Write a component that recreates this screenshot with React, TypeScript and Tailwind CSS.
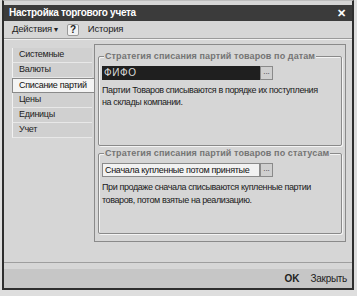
import React from "react";

const tabs = ["Системные", "Валюты", "Списание партий", "Цены", "Единицы", "Учет"];

function GroupBox({ title, children, className }: { title: string; children: React.ReactNode; className?: string }) {
  return (
    <div className={"relative border border-[#8a8a8a] rounded-[2px] shadow-[inset_1px_1px_0_#f4f4f4,1px_1px_0_#f4f4f4] " + (className || "")}>
      <div className="absolute -top-[7px] left-[5px] px-[1px] bg-[#d6d6d6] text-[9px] font-bold leading-[12px] text-[#747474] whitespace-nowrap tracking-[0.1px]">
        {title}
      </div>
      {children}
    </div>
  );
}

export default function App() {
  return (
    <div className="w-[357px] h-[296px] bg-[#dedede] overflow-hidden" style={{ fontFamily: '"Liberation Sans", Arial, sans-serif' }}>
      <div className="ml-[2px] w-[352px] h-[290px] flex flex-col border-x-2 border-b-2 border-[#2e2e2e] bg-[#d6d6d6] pt-[4px] border-t border-t-[#bdbdbd]">
        {/* title bar */}
        <div className="h-[16px] bg-[#3b3b3b] flex items-center justify-between pl-[5px] pr-[6px]">
          <span className="text-white text-[10px] font-bold leading-none tracking-[-0.3px]">Настройка торгового учета</span>
          <span className="text-white text-[11px] font-bold leading-none">✕</span>
        </div>
        {/* toolbar */}
        <div className="h-[18px] flex items-center pl-[8px] text-[9.5px] text-[#222] border-b border-[#9a9a9a] tracking-[-0.2px]">
          <span>Действия</span>
          <span className="ml-[2px] text-[8px]">▾</span>
          <span className="ml-[9px] w-[12px] h-[12px] flex items-center justify-center bg-[#f2f2f2] border border-[#9a9a9a] rounded-[2px] font-bold text-[10px] leading-none">?</span>
          <span className="ml-[9px]">История</span>
        </div>
        {/* body */}
        <div className="flex pl-[8px] pt-[4px] border-t border-[#f0f0f0]">
          {/* tabs */}
          <div className="w-[80px] mt-[4px] flex flex-col">
            {tabs.map((t) => (
              <div
                key={t}
                className={
                  t === "Списание партий"
                    ? "h-[15px] pl-[6px] flex items-center whitespace-nowrap text-[9px] tracking-[-0.3px] text-[#111] bg-[#f4f4f4] border border-[#8a8a8a] border-r-0 -mr-[2px] relative z-10"
                    : "h-[15px] pl-[6px] flex items-center whitespace-nowrap text-[9px] tracking-[-0.3px] text-[#222] bg-[#d0d0d0] border-l border-[#f2f2f2] border-b border-b-[#e8e8e8]"
                }
              >
                {t}
              </div>
            ))}
          </div>
          {/* panel */}
          <div className="ml-[2px] w-[252px] h-[198px] border border-[#8a8a8a] px-[3px] pt-[11px] flex flex-col">
            <GroupBox title="Стратегия списания партий товаров по датам" className="h-[90px] pt-[9px] px-[3px]">
              <div className="flex h-[14px] w-[171px]">
                <div className="flex-1 bg-[#1f1f1f] text-[#dcdcdc] text-[10px] leading-[14px] pl-[2px] tracking-[0.6px]">ФИФО</div>
                <div className="w-[13px] bg-[#cfcfcf] border border-[#8a8a8a] text-[8px] leading-[10px] text-center text-[#333]">...</div>
              </div>
              <div className="mt-[4px] text-[9px] leading-[12px] text-[#1a1a1a] whitespace-nowrap tracking-[-0.4px]">
                Партии Товаров списываются в порядке их поступления<br />на склады компании.
              </div>
            </GroupBox>
            <GroupBox title="Стратегия списания партий товаров по статусам" className="mt-[7px] h-[81px] pt-[9px] px-[3px]">
              <div className="flex h-[14px] w-[171px]">
                <div className="flex-1 bg-[#f2f2f2] border border-[#8a8a8a] text-[#111] text-[9px] leading-[12px] pl-[2px] whitespace-nowrap tracking-[-0.3px] overflow-hidden">Сначала купленные потом принятые</div>
                <div className="w-[13px] bg-[#cfcfcf] border border-[#8a8a8a] text-[8px] leading-[10px] text-center text-[#333]">...</div>
              </div>
              <div className="mt-[4px] text-[9px] leading-[13px] text-[#1a1a1a] whitespace-nowrap tracking-[-0.4px]">
                При продаже сначала списываются купленные партии<br />товаров, потом взятые на реализацию.
              </div>
            </GroupBox>
          </div>
        </div>
        <div className="flex-1" />
        {/* bottom bar */}
        <div className="border-t border-[#9e9e9e] pt-[6px]">
          <div className="h-[19px] bg-[#c6c6c6] flex items-center justify-end pr-[5px] gap-[11px] text-[10px] text-[#222]">
            <span className="font-bold">OK</span>
            <span className="tracking-[-0.3px]">Закрыть</span>
          </div>
        </div>
      </div>
    </div>
  );
}
